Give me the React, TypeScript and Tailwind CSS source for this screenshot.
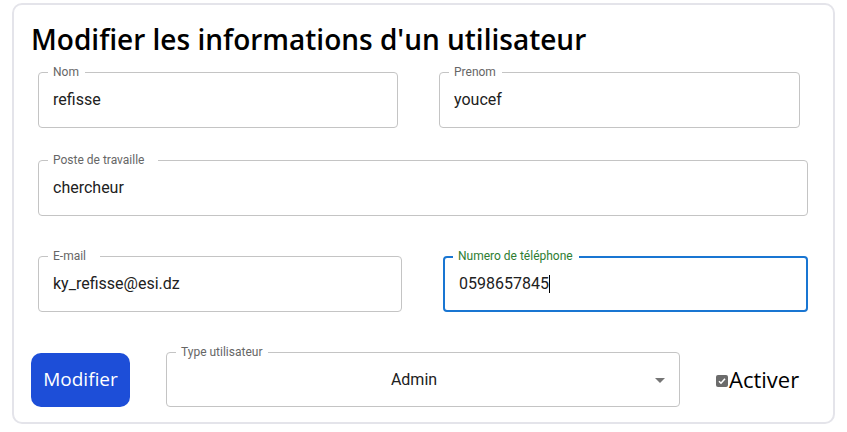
import { ReactNode } from "react";

const roboto = { fontFamily: "Roboto, 'Liberation Sans', sans-serif" };

interface FieldProps {
  label: string;
  value?: ReactNode;
  className?: string;
  focused?: boolean;
  wideNotch?: boolean;
}

const OutlinedField = ({
  label,
  value,
  className = "",
  focused = false,
  wideNotch = false,
}: FieldProps) => {
  return (
    <div
      className={`relative h-[56px] rounded-[4px] flex items-center px-[14px] ${
        focused ? "border-2 border-[#1976d2] px-[13px]" : "border border-[#c4c4c4]"
      } ${className}`}
      style={roboto}
    >
      <span
        className={`absolute ${
          focused ? "left-[8px] top-[-9px] text-[#2e7d32]" : "left-[9px] top-[-8px] text-[#666666]"
        } bg-white pl-[5px] ${wideNotch ? "pr-[14px]" : "pr-[6px]"} text-[12px] leading-[15px]`}
      >
        {label}
      </span>
      <span className="text-[16px] text-[#212121]">{value}</span>
    </div>
  );
};

const App = () => {
  return (
    <div className="w-[847px] h-[432px] bg-white pt-[3px] pl-[12px]">
      <div className="w-[823px] h-[421px] border-2 border-[#e4e4ea] rounded-[10px] pl-[17px] pt-[17px]">
        <h1
          className="text-[28px] leading-[34px] font-semibold text-black"
          style={{ fontFamily: "'Open Sans', 'Noto Sans', sans-serif" }}
        >
          Modifier les informations d'un utilisateur
        </h1>

        <div className="flex gap-[41px] mt-[16px] ml-[7px]">
          <OutlinedField label="Nom" value="refisse" className="w-[360px]" />
          <OutlinedField label="Prenom" value="youcef" className="w-[361px]" />
        </div>

        <div className="mt-[32px] ml-[7px]">
          <OutlinedField
            label="Poste de travaille"
            value="chercheur"
            className="w-[770px]"
            wideNotch
          />
        </div>

        <div className="flex gap-[41px] mt-[40px] ml-[7px]">
          <OutlinedField
            label="E-mail"
            value="ky_refisse@esi.dz"
            className="w-[364px]"
            wideNotch
          />
          <OutlinedField
            label="Numero de téléphone"
            focused
            className="w-[365px]"
            value={
              <span className="flex items-center">
                0598657845
                <span className="inline-block w-px h-[18px] bg-black" />
              </span>
            }
          />
        </div>

        <div className="flex items-center mt-[40px]">
          <button
            className="w-[99px] h-[54px] rounded-[10px] bg-[#1d4ed8] text-white text-[19px]"
            style={{ fontFamily: "'Open Sans', 'Noto Sans', sans-serif" }}
          >
            Modifier
          </button>

          <div
            className="relative ml-[36px] w-[514px] h-[55px] border border-[#c4c4c4] rounded-[4px] flex items-center pl-[14px] pr-[32px]"
            style={roboto}
          >
            <span className="absolute left-[9px] top-[-8px] bg-white pl-[5px] pr-[6px] text-[12px] leading-[15px] text-[#666666]">
              Type utilisateur
            </span>
            <span className="flex-1 text-center text-[16px] text-[#212121]">Admin</span>
            <svg
              className="absolute right-[7px] top-[15px]"
              width="24"
              height="24"
              viewBox="0 0 24 24"
              fill="#757575"
            >
              <path d="M7 10l5 5 5-5z" />
            </svg>
          </div>

          <label
            className="flex items-center ml-[36px] text-[22px] text-black"
            style={{ fontFamily: "'Open Sans', 'Noto Sans', sans-serif" }}
          >
            <span className="w-[12px] h-[12px] rounded-[2px] bg-[#6b6b6b] flex items-center justify-center mt-[3px]">
              <svg width="10" height="10" viewBox="0 0 10 10" fill="none">
                <path d="M2 5.2l2 2 4-4.4" stroke="white" strokeWidth="1.6" />
              </svg>
            </span>
            <span className="ml-[1px]">Activer</span>
          </label>
        </div>
      </div>
    </div>
  );
};

export default App;
